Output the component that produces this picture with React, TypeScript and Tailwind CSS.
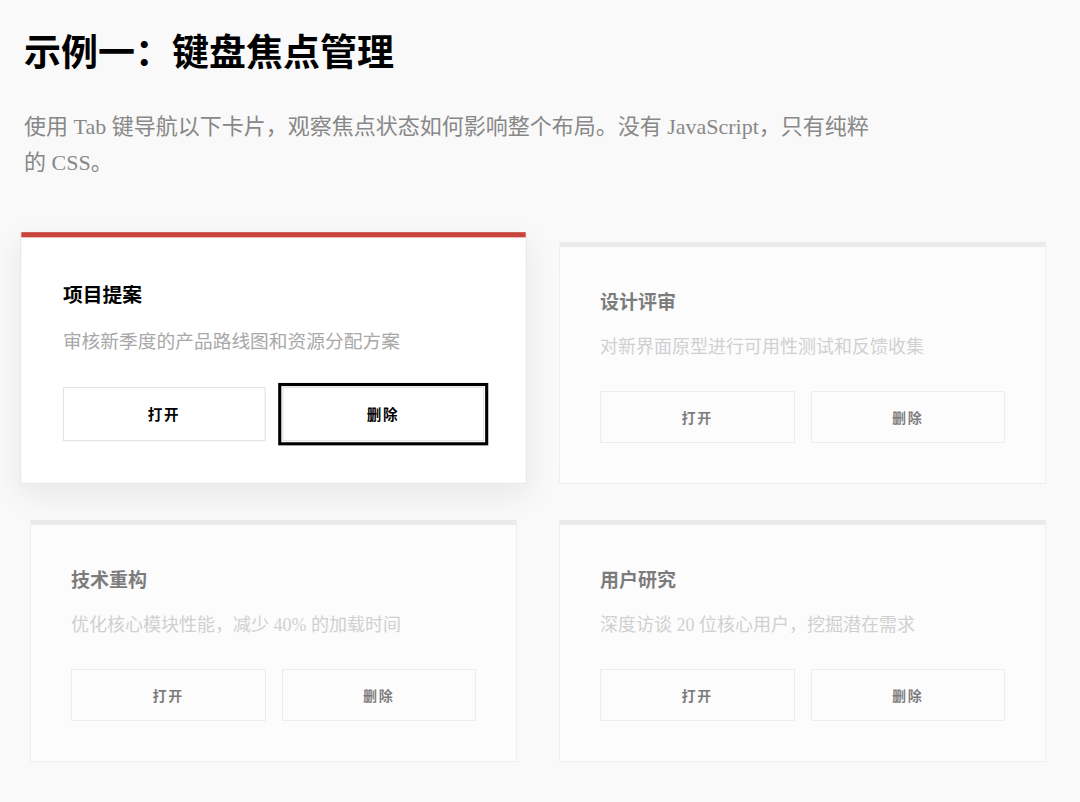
import React from 'react'

const cards = [
  { title: '项目提案', desc: '审核新季度的产品路线图和资源分配方案', focused: true },
  { title: '设计评审', desc: '对新界面原型进行可用性测试和反馈收集', focused: false },
  { title: '技术重构', desc: '优化核心模块性能，减少 40% 的加载时间', focused: false },
  { title: '用户研究', desc: '深度访谈 20 位核心用户，挖掘潜在需求', focused: false },
]

const serif = { fontFamily: '"Liberation Serif", "Noto Sans CJK SC", serif' }

function Card({ title, desc, focused }: { title: string; desc: string; focused: boolean }) {
  return (
    <div
      className={
        focused
          ? 'relative z-10 flex flex-col bg-white border border-[#e6e6e6] border-t-0 scale-[1.04] -translate-y-[5px] shadow-[0_10px_30px_rgba(0,0,0,0.08)]'
          : 'flex flex-col bg-white border border-[#e6e6e6] border-t-0 opacity-50'
      }
    >
      <div className={focused ? 'h-[5px] bg-[#c9443d]' : 'h-[5px] bg-[#dcdcdc]'} />
      <div className="px-10 pt-10 pb-10">
        <h3 className="text-[19px] leading-[28px] font-bold text-black">{title}</h3>
        <p className="mt-[18px] text-[18px] leading-[28px] text-[#a8a8a8]" style={serif}>
          {desc}
        </p>
        <div className="mt-[30px] grid grid-cols-2 gap-4">
          <button className="h-[52px] bg-white border border-[#e2e2e2] text-[14px] font-bold tracking-[0.12em] text-black">
            打开
          </button>
          <button
            className={
              focused
                ? 'h-[52px] bg-white border border-[#e2e2e2] text-[14px] font-bold tracking-[0.12em] text-black outline-[3px] outline-solid outline-black outline-offset-[1px]'
                : 'h-[52px] bg-white border border-[#e2e2e2] text-[14px] font-bold tracking-[0.12em] text-black'
            }
          >
            删除
          </button>
        </div>
      </div>
    </div>
  )
}

export default function App() {
  return (
    <main
      className="min-h-screen bg-[#f9f9f9] px-6 pt-[28px] pb-10"
      style={{ fontFamily: '"Noto Sans CJK SC", "Liberation Sans", sans-serif' }}
    >
      <h1 className="text-[37px] leading-[44px] font-bold text-black">示例一：键盘焦点管理</h1>
      <p className="mt-[37px] max-w-[856px] text-[22px] leading-[36px] text-[#888]" style={serif}>
        使用 Tab 键导航以下卡片，观察焦点状态如何影响整个布局。没有 JavaScript，只有纯粹的 CSS。
      </p>
      <div className="mt-[61px] ml-[6px] grid grid-cols-[487px_487px] gap-x-[42px] gap-y-[36px]">
        {cards.map((c) => (
          <Card key={c.title} {...c} />
        ))}
      </div>
    </main>
  )
}
